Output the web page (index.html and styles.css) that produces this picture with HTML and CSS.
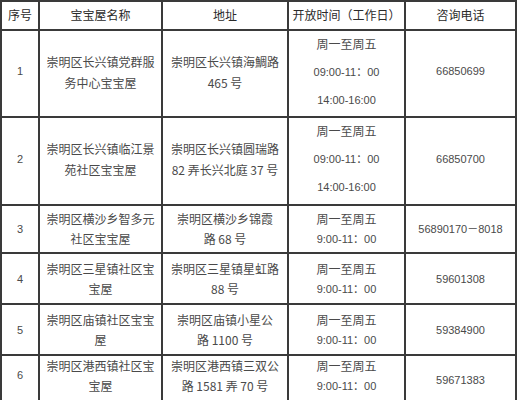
FILE: index.html
```html
<!DOCTYPE html>
<html lang="zh">
<head>
<meta charset="utf-8">
<link rel="stylesheet" href="styles.css">
</head>
<body>
<div class="tbl">
  <div class="c h">序号</div>
  <div class="c h">宝宝屋名称</div>
  <div class="c h">地址</div>
  <div class="c h">开放时间（工作日）</div>
  <div class="c h">咨询电话</div>

  <div class="c r1 num">1</div>
  <div class="c r1">崇明区长兴镇党群服<br>务中心宝宝屋</div>
  <div class="c r1">崇明区长兴镇海鯛路<br>465 号</div>
  <div class="c r1 time"><span>周一至周五</span><span class="n">09:00-11：00</span><span class="n">14:00-16:00</span></div>
  <div class="c r1 n">66850699</div>

  <div class="c r2 num">2</div>
  <div class="c r2">崇明区长兴镇临江景<br>苑社区宝宝屋</div>
  <div class="c r2">崇明区长兴镇圆瑞路<br>82 弄长兴北庭 37 号</div>
  <div class="c r2 time"><span>周一至周五</span><span class="n">09:00-11：00</span><span class="n">14:00-16:00</span></div>
  <div class="c r2 n">66850700</div>

  <div class="c num">3</div>
  <div class="c">崇明区横沙乡智多元<br>社区宝宝屋</div>
  <div class="c">崇明区横沙乡锦霞<br>路 68 号</div>
  <div class="c"><span>周一至周五</span><span class="n">9:00-11：00</span></div>
  <div class="c n">56890170－8018</div>

  <div class="c num">4</div>
  <div class="c">崇明区三星镇社区宝<br>宝屋</div>
  <div class="c">崇明区三星镇星虹路<br>88 号</div>
  <div class="c"><span>周一至周五</span><span class="n">9:00-11：00</span></div>
  <div class="c n">59601308</div>

  <div class="c num">5</div>
  <div class="c">崇明区庙镇社区宝宝<br>屋</div>
  <div class="c">崇明区庙镇小星公<br>路 1100 号</div>
  <div class="c"><span>周一至周五</span><span class="n">9:00-11：00</span></div>
  <div class="c n">59384900</div>

  <div class="c num last last-num">6</div>
  <div class="c last">崇明区港西镇社区宝<br>宝屋</div>
  <div class="c last">崇明区港西镇三双公<br>路 1581 弄 70 号</div>
  <div class="c last"><span>周一至周五</span><span class="n">9:00-11：00</span></div>
  <div class="c last last-phone n">59671383</div>
</div>
</body>
</html>
```
FILE: styles.css
```css
html, body {
  margin: 0;
  padding: 0;
  background: #ffffff;
}
body {
  width: 520px;
  height: 400px;
  overflow: hidden;
  font-family: "Noto Sans CJK SC", "Liberation Sans", sans-serif;
  font-size: 12px;
  color: #4a4a4a;
}
.tbl {
  display: grid;
  grid-template-columns: 38px 123px 126px 117px 111px;
  grid-template-rows: 29px 87px 88px 48px 51px 51px 60px;
  border-top: 2px solid #3a3a3a;
  border-left: 2px solid #3a3a3a;
  width: 517px;
  box-sizing: border-box;
}
.c {
  border-right: 2px solid #3a3a3a;
  border-bottom: 2px solid #3a3a3a;
  display: flex;
  flex-direction: column;
  align-items: center;
  justify-content: center;
  text-align: center;
  line-height: 20px;
  overflow: hidden;
}
.h {
  color: #2a2a2a;
  padding-bottom: 1px;
}
.r1, .r2 {
  padding-bottom: 4px;
  line-height: 21px;
}
.time {
  line-height: 28px;
}
.n, .num {
  font-family: "Liberation Sans", "Noto Sans CJK SC", sans-serif;
  font-size: 11px;
}
.last {
  justify-content: flex-start;
  padding-top: 0;
}
.last-num {
  padding-top: 9px;
}
.last-phone {
  padding-top: 14px;
}
```
